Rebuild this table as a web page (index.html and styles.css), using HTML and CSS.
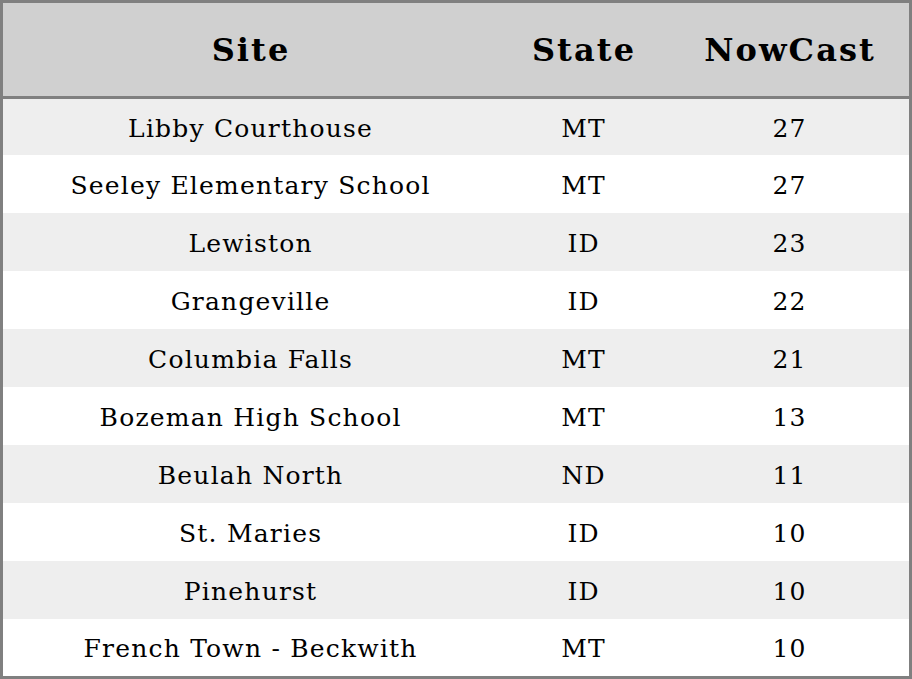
FILE: index.html
```html
<!DOCTYPE html>
<html>
<head>
<meta charset="utf-8">
<link rel="stylesheet" href="styles.css">
</head>
<body>
<div class="table">
  <div class="row head"><div>Site</div><div>State</div><div>NowCast</div></div>
  <div class="row odd first"><div>Libby Courthouse</div><div>MT</div><div>27</div></div>
  <div class="row"><div>Seeley Elementary School</div><div>MT</div><div>27</div></div>
  <div class="row odd"><div>Lewiston</div><div>ID</div><div>23</div></div>
  <div class="row"><div>Grangeville</div><div>ID</div><div>22</div></div>
  <div class="row odd"><div>Columbia Falls</div><div>MT</div><div>21</div></div>
  <div class="row"><div>Bozeman High School</div><div>MT</div><div>13</div></div>
  <div class="row odd"><div>Beulah North</div><div>ND</div><div>11</div></div>
  <div class="row"><div>St. Maries</div><div>ID</div><div>10</div></div>
  <div class="row odd"><div>Pinehurst</div><div>ID</div><div>10</div></div>
  <div class="row last"><div>French Town - Beckwith</div><div>MT</div><div>10</div></div>
</div>
</body>
</html>
```
FILE: styles.css
```css
html, body {
  margin: 0;
  padding: 0;
  background: #ffffff;
}
.table {
  box-sizing: border-box;
  width: 912px;
  height: 679px;
  border: 3px solid #808080;
  font-family: "DejaVu Serif", serif;
  color: #000;
  display: flex;
  flex-direction: column;
}
.row {
  box-sizing: border-box;
  display: grid;
  grid-template-columns: 494px 172px 240px;
  height: 58px;
  padding-top: 2px;
  align-items: center;
  text-align: center;
  font-size: 25px;
  letter-spacing: 1.2px;
  background: #ffffff;
}
.row > div {
  padding-left: 1.2px;
}
.row.odd {
  background: #eeeeee;
}
.row.first {
  height: 56px;
}
.row.last {
  height: 57px;
}
.row.head {
  height: 96px;
  padding-top: 0;
  border-bottom: 3px solid #808080;
  background: #d0d0d0;
  font-weight: bold;
  font-size: 32px;
  letter-spacing: 2.1px;
}
.row.head > div {
  padding-left: 2.1px;
}
```
